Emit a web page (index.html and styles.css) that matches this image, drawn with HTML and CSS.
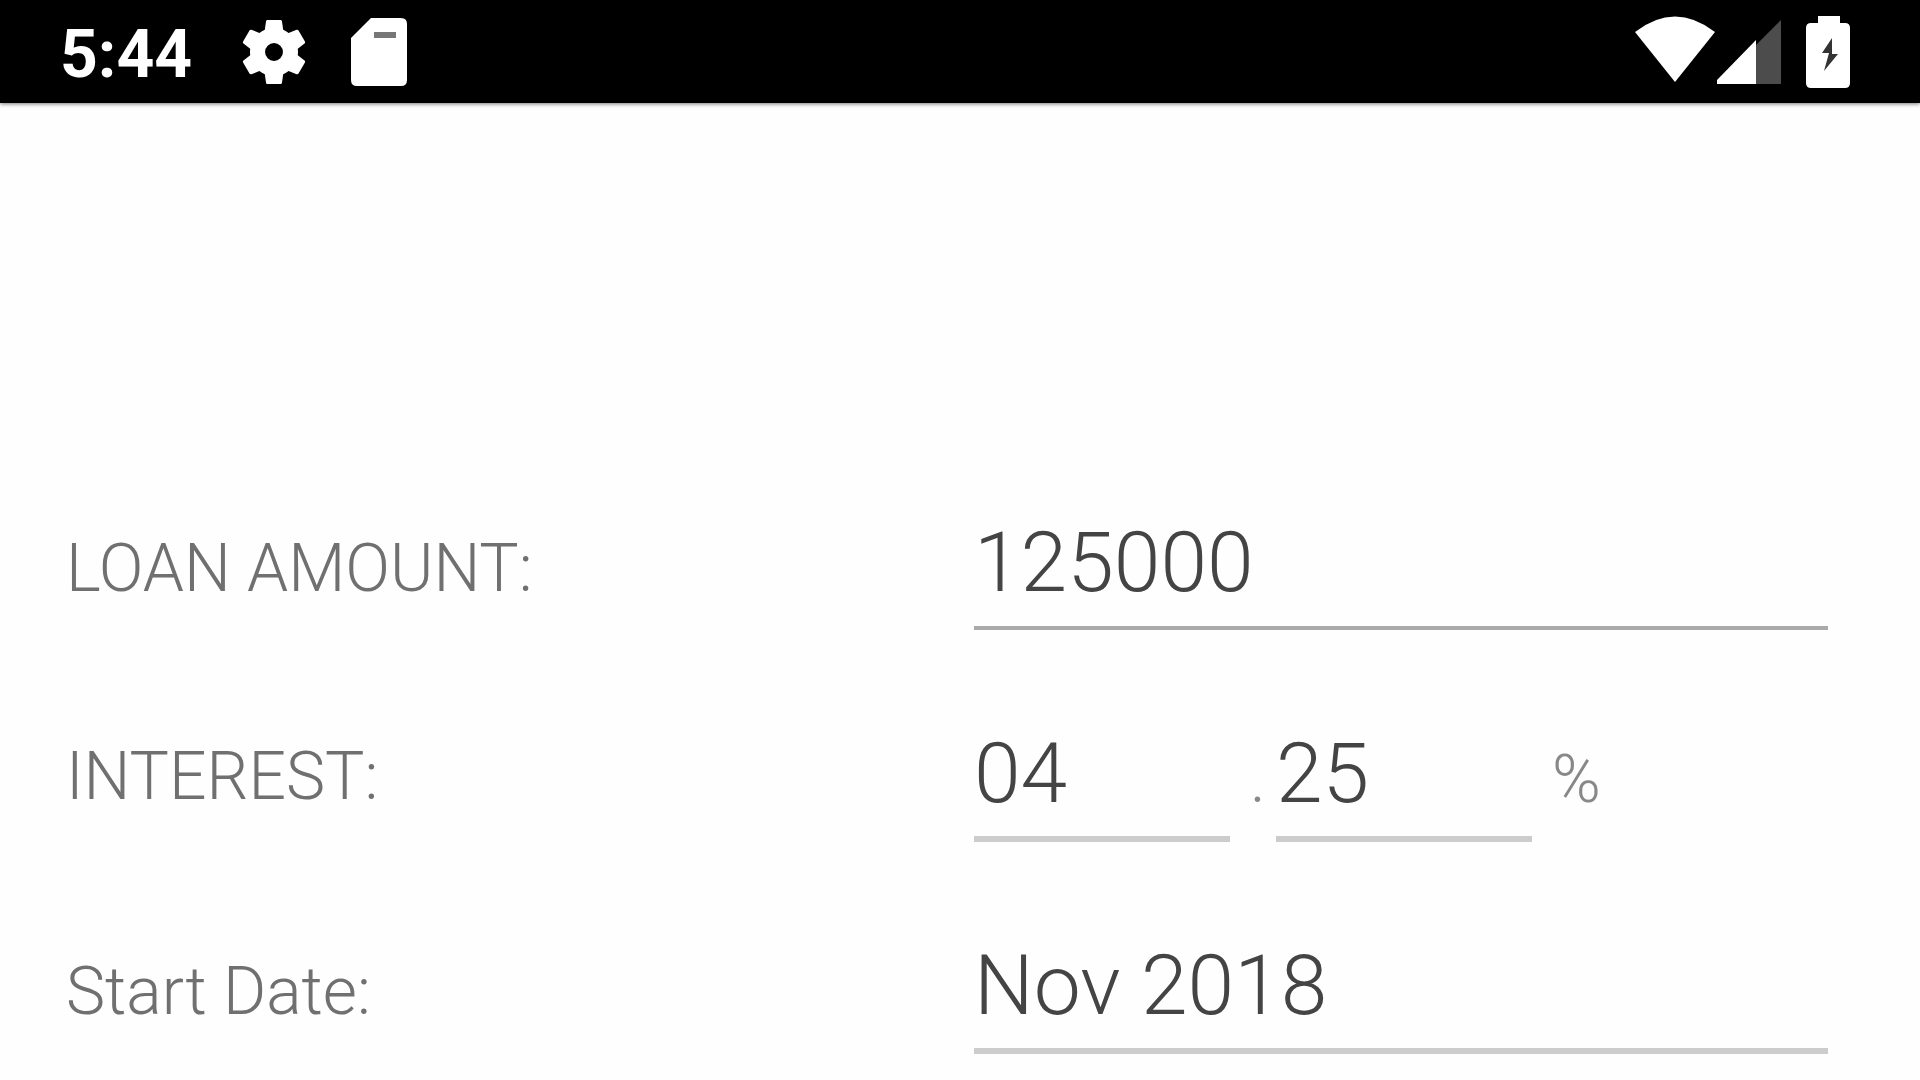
FILE: index.html
```
<!DOCTYPE html>
<html lang="en">
<head>
<meta charset="utf-8">
<title>Loan</title>
<link rel="stylesheet" href="styles.css">
</head>
<body>
<header class="status">
  <div class="status-left">
    <span class="clock">5:44</span>
    <svg class="gear" viewBox="2 2 20 20" aria-hidden="true"><path d="M19.43 12.98c.04-.32.07-.64.07-.98s-.03-.66-.07-.98l2.11-1.65c.19-.15.24-.42.12-.64l-2-3.46c-.12-.22-.39-.3-.61-.22l-2.49 1c-.52-.4-1.08-.73-1.69-.98l-.38-2.65C14.46 2.18 14.25 2 14 2h-4c-.25 0-.46.18-.49.42l-.38 2.65c-.61.25-1.17.59-1.69.98l-2.49-1c-.23-.09-.49 0-.61.22l-2 3.46c-.13.22-.07.49.12.64l2.11 1.65c-.04.32-.07.65-.07.98s.03.66.07.98l-2.11 1.65c-.19.15-.24.42-.12.64l2 3.46c.12.22.39.3.61.22l2.49-1c.52.4 1.08.73 1.69.98l.38 2.65c.03.24.24.42.49.42h4c.25 0 .46-.18.49-.42l.38-2.65c.61-.25 1.17-.59 1.69-.98l2.49 1c.23.09.49 0 .61-.22l2-3.46c.12-.22.07-.49-.12-.64l-2.11-1.65zM12 14.8a2.8 2.8 0 1 1 0-5.6 2.8 2.8 0 0 1 0 5.6z"/></svg>
    <svg class="card" viewBox="0 0 56 68" aria-hidden="true"><path d="M20 0H50Q56 0 56 6V62Q56 68 50 68H6Q0 68 0 62V20Z"/><path class="slot" d="M23 14H45V20H23Z"/></svg>
  </div>
  <div class="status-right">
    <svg class="wifi" viewBox="0 0 80 66" aria-hidden="true"><path d="M0 16Q40-15 80 16L40 66Z"/></svg>
    <svg class="signal" viewBox="0 0 64 64" aria-hidden="true"><path class="dim" d="M64 0V64H0Z"/><path d="M39 20V64H0V60Z"/></svg>
    <svg class="battery" viewBox="0 0 44 72" aria-hidden="true"><path d="M12 0H34V7H39Q44 7 44 12V67Q44 72 39 72H5Q0 72 0 67V12Q0 7 5 7H12Z"/><path class="bolt" d="M26 22L16 37H23L18 55L32 38H26Z"/></svg>
  </div>
</header>
<main>
  <form class="form">
    <div class="row">
      <label class="label" for="amount">LOAN AMOUNT:</label>
      <input class="field strong" id="amount" value="125000">
    </div>
    <div class="row split">
      <label class="label" for="whole">INTEREST:</label>
      <div class="rate">
        <input class="field" id="whole" value="04">
        <span class="unit">.</span>
        <input class="field" id="fraction" aria-label="Interest decimals" value="25">
        <span class="unit">%</span>
      </div>
    </div>
    <div class="row">
      <label class="label" for="start">Start Date:</label>
      <input class="field" id="start" value="Nov 2018">
    </div>
  </form>
</main>
</body>
</html>
```
FILE: styles.css
```
* { box-sizing: border-box; }
body { margin: 0; background: #fefefe; font-family: Roboto, sans-serif; }
.status {
  height: 103px; padding: 0 70px 0 60px; background: #000; color: #fff;
  box-shadow: 0 1px 4px #777;
  display: flex; justify-content: space-between;
}
.status svg { fill: #fff; display: block; }
.status-left, .status-right { display: flex; align-items: center; }
.clock { font-size: 66px; line-height: 98px; font-weight: 700; width: 182px; padding-top: 6px; }
.gear { width: 64px; height: 70px; }
.card { width: 56px; height: 68px; margin-left: 45px; }
.wifi { width: 80px; height: 66px; margin-bottom: 6px; }
.signal { width: 64px; height: 64px; margin-left: 2px; }
.battery { width: 44px; height: 72px; margin-left: 25px; }
.status .dim { fill: #4c4c4c; }
.status .slot { fill: #777; }
.status .bolt { fill: #333; }
.form { padding: 395px 92px 0 66px; display: grid; gap: 80px; }
.row { display: grid; grid-template-columns: 908px 1fr; height: 132px; align-items: baseline; }
.split { align-items: center; }
.label, .unit { font-size: 66px; font-weight: 300; color: #707070; }
.field {
  width: 100%; height: 132px; padding: 0; border: 0; border-bottom: 6px solid #ccc;
  background: none; color: #444; font: 300 84px Roboto, sans-serif; outline: 0;
}
.strong { border-bottom: 4px solid #aaa; }
.rate { display: grid; grid-template-columns: 256px 46px 256px 1fr; align-items: baseline; }
.unit { padding-left: 20px; color: #888; }
```
